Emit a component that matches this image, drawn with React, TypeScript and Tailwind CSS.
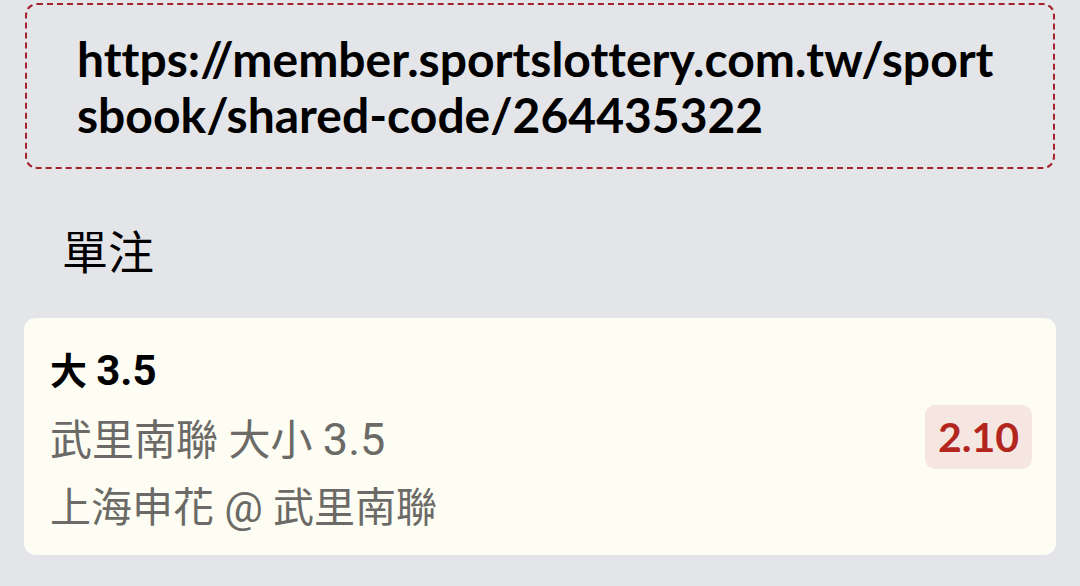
export default function App() {
  const lato = { fontFamily: 'Lato, "Noto Sans CJK TC", sans-serif' };
  const noto = { fontFamily: '"Noto Sans CJK TC", sans-serif' };
  const roboto = { fontFamily: 'Roboto, "Noto Sans CJK TC", sans-serif' };
  return (
    <div className="w-[1080px] h-[586px] bg-[#e4e5e9] overflow-hidden" style={lato}>
      <div className="px-[25px] pt-[3px]">
        <div className="h-[166px] border-2 border-dashed border-[#a3222c] rounded-[12px] pl-[50px] pr-[20px] pt-[26px]">
          <div className="text-[48px] leading-[56px] font-bold text-black whitespace-nowrap [font-variant-ligatures:none]">
            https://member.sportslottery.com.tw/sport
            <br />
            sbook/shared-code/264435322
          </div>
        </div>
      </div>
      <div className="pl-[62px] pt-[52px] text-[46px] leading-[56px] text-black" style={noto}>單注</div>
      <div className="mx-[24px] mt-[41px] h-[237px] bg-[#fdfdf4] rounded-[12px] pl-[26px] pr-[24px] flex items-center">
        <div className="flex-1 flex flex-col pt-[16px]" style={roboto}>
          <div className="text-[37px] leading-[48px] font-bold text-black">
            大 <span className="text-[42px]">3.5</span>
          </div>
          <div className="text-[42px] leading-[67px] mt-[9px] text-[#6b6a66]">
            武里南聯 大小 <span className="text-[45px]">3.5</span>
          </div>
          <div className="text-[41px] leading-[67px] text-[#6b6a66]">
            上海申花 <span className="text-[43px]">@</span> 武里南聯
          </div>
        </div>
        <div className="w-[107px] h-[64px] rounded-[10px] bg-[#f6e6e1] flex items-center justify-center text-[41px] font-bold text-[#b3261e]">
          2.10
        </div>
      </div>
    </div>
  );
}
